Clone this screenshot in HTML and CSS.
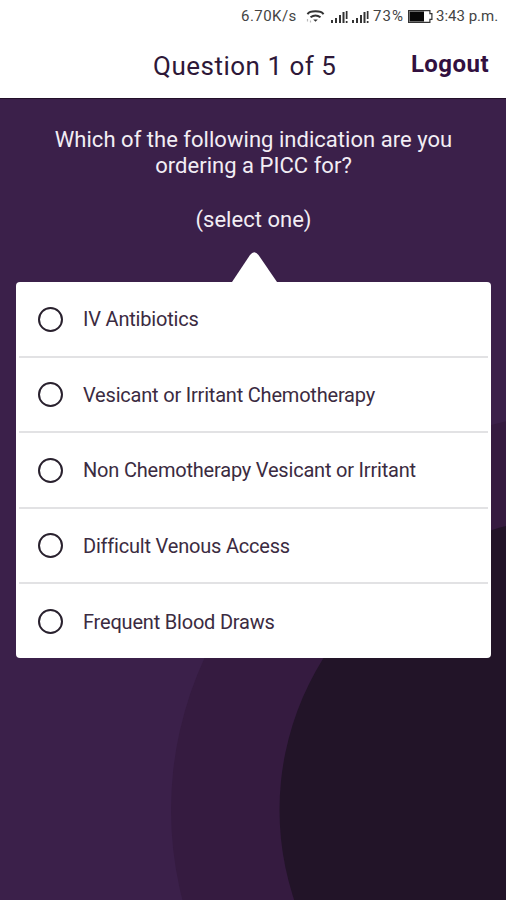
FILE: index.html
```html
<!DOCTYPE html>
<html lang="en">
<head>
<meta charset="utf-8">
<title>Question 1 of 5</title>
<link rel="stylesheet" href="styles.css">
</head>
<body>
<div class="status">
  <span class="speed">6.70K/s</span>
  <svg class="wifi" width="19" height="13" viewBox="0 0 19 13" fill="none" stroke="#333" stroke-width="2"><path d="M1.5 4.2C4 .4 15 .4 17.5 4.2M4.5 7.3Q9.5 3.6 14.5 7.3"/><path d="M7.2 9.5h4.6l-2.3 2.3z" fill="#333" stroke="none"/><path d="M1.5 9v2.5M4.5 10.5v2" stroke="#bbb" stroke-width="1.2"/></svg>
  <svg class="signal" width="17" height="13" viewBox="0 0 17 13" fill="#333"><path d="M0 10h2v3H0zM4 8h2v5H4zM8 5h2v8H8zM11.5 2h2v11h-2zM14.8 1h1.7v8h-1.7zM14.8 11h1.7v2h-1.7z"/></svg>
  <svg class="signal" width="17" height="13" viewBox="0 0 17 13" fill="#333"><path d="M0 10h2v3H0zM4 8h2v5H4zM8 5h2v8H8zM11.5 2h2v11h-2zM14.8 1h1.7v8h-1.7zM14.8 11h1.7v2h-1.7z"/></svg>
  <span class="percent">73%</span>
  <svg class="battery" width="25" height="13" viewBox="0 0 25 13"><path d="M.6.6h21.3v3h2v5.8h-2v3H.6z" fill="none" stroke="#333" stroke-width="1.2"/><path d="M1.5 1.5h14.5v10H1.5z" fill="#080808"/></svg>
  <span class="time">3:43 p.m.</span>
</div>
<header class="header"><h1 class="title">Question 1 of 5</h1><span class="logout">Logout</span></header>
<main class="main">
  <svg class="backdrop" width="506" height="801" viewBox="0 99 506 801"><ellipse cx="621" cy="810" rx="450" ry="402" fill="#351b40"/><ellipse cx="584.5" cy="810" rx="305" ry="294" fill="#221428"/></svg>
  <div class="question"><p class="line first">Which of the following indication are you</p><p class="line second">ordering a PICC for?</p><p class="line hint">(select one)</p></div>
  <svg class="pointer" width="46" height="30" viewBox="0 0 46 30"><path d="M1 30L19 3Q23.3-2.5 27.5 3L46 30z" fill="#fff"/></svg>
  <ul class="options">
    <li class="option"><i class="radio"></i><span>IV Antibiotics</span></li>
    <li class="option"><i class="radio"></i><span>Vesicant or Irritant Chemotherapy</span></li>
    <li class="option"><i class="radio"></i><span>Non Chemotherapy Vesicant or Irritant</span></li>
    <li class="option"><i class="radio"></i><span>Difficult Venous Access</span></li>
    <li class="option"><i class="radio"></i><span>Frequent Blood Draws</span></li>
  </ul>
</main>
</body>
</html>
```
FILE: styles.css
```css
* { box-sizing: border-box; }
body { margin: 0; width: 506px; height: 900px; overflow: hidden; background: #fff; font-family: Roboto, sans-serif; color: #2e1838; }
.status { display: flex; align-items: center; height: 32px; padding-left: 241px; font-size: 15px; color: #444; white-space: nowrap; }
.status span, .status svg { flex: none; }
.speed { width: 65px; letter-spacing: .45px; }
.wifi { margin-right: 6px; }
.signal { margin-right: 4px; }
.percent { width: 35px; letter-spacing: 1.1px; }
.battery { margin-right: 3px; }
.time { letter-spacing: 0; }
.header { display: grid; grid-template-columns: 153px 1fr auto; height: 67px; padding-right: 17px; border-bottom: 1px solid #221029; line-height: 32px; }
.title { grid-column: 2; margin: 18px 0 0; font-size: 26px; font-weight: 400; letter-spacing: .5px; }
.logout { margin-top: 16px; font-size: 24px; font-weight: 700; letter-spacing: .45px; color: #321040; }
.main { position: relative; height: 801px; padding: 28px 15px 0 16px; background: #3b204a; }
.backdrop { position: absolute; top: 0; left: 0; }
.question { position: relative; height: 125px; text-align: center; font-size: 22px; line-height: 26px; letter-spacing: .03px; color: #f2edf4; }
.line { margin: 0; }
.hint { margin-top: 28px; }
.pointer { position: relative; display: block; margin-left: 215px; }
.options { position: relative; height: 376px; margin: 0; padding: 0 3px; list-style: none; background: #fff; border-radius: 4px; }
.option { display: flex; align-items: center; height: 75.5px; padding: 1px 0 0 19px; border-bottom: 2px solid #e2e2e4; font-size: 20px; letter-spacing: -.2px; color: #3b2b41; }
.option:last-child { height: 74px; border: 0; }
.radio { width: 25px; height: 25px; margin-right: 20px; border: 2px solid #29212e; border-radius: 50%; }
```
